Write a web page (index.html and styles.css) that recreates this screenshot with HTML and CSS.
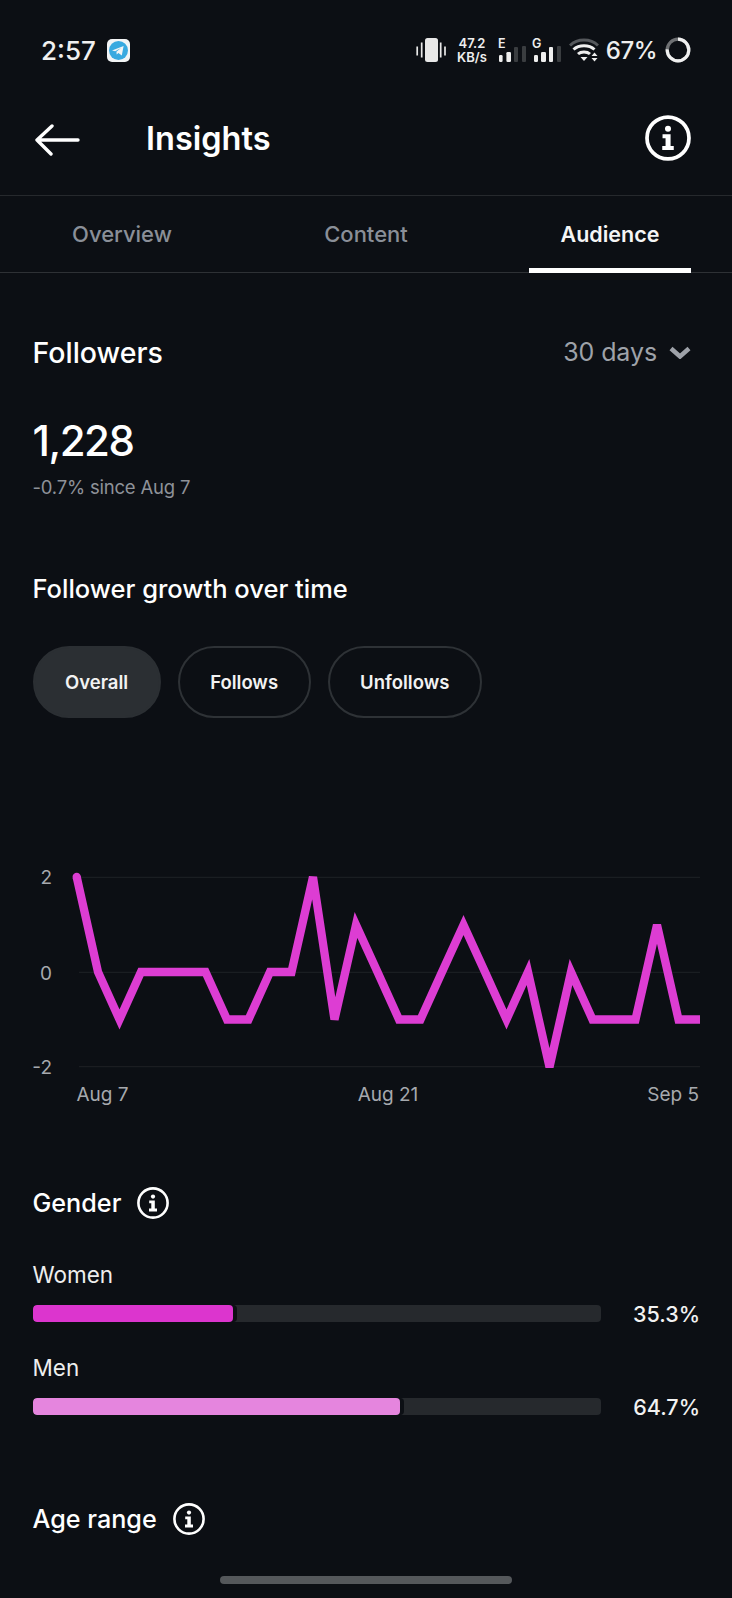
FILE: index.html
```html
<!DOCTYPE html>
<html lang="en">
<head>
  <meta charset="UTF-8">
  <meta name="viewport" content="width=device-width, initial-scale=1.0">
  <title>Insights</title>
  <link rel="stylesheet" href="styles.css">
</head>
<body>
  <svg class="defs" width="0" height="0">
    <symbol id="info" viewBox="0 0 32 32">
      <circle cx="16" cy="16" r="14.6" fill="none" stroke="currentColor" stroke-width="2.6"/>
      <circle cx="16" cy="9.6" r="2.1" fill="currentColor"/>
      <path d="M12.2 13.4h5.6v8.2h2.2v2.8h-8v-2.8h2.3v-5.4h-2.1z" fill="currentColor"/>
    </symbol>
  </svg>

  <div class="page">
    <div class="statusbar">
      <div class="status-left">
        <span class="time">2:57</span>
        <svg class="tg" width="23" height="23" viewBox="0 0 23 23">
          <rect width="23" height="23" rx="5" fill="#f2f4f5"/>
          <circle cx="11.5" cy="11.5" r="9.5" fill="#38a9e0"/>
          <path d="M5 11.6l11.6-4.6-1.8 9.6-3.4-2.6-1.7 1.6-.3-2.9 4.6-3.6-5.8 3.1z" fill="#f2f4f5"/>
        </svg>
      </div>
      <div class="status-right">
        <svg width="30" height="24" viewBox="0 0 30 24">
          <rect x="9" y="0" width="13" height="24" rx="2.5" fill="#e8e8e8"/>
          <path d="M1.2 8.5v9M5.7 4.5v15M24.7 4.5v15M29 8.5v9" stroke="#e8e8e8" stroke-width="1.7"/>
        </svg>
        <div class="speed"><span>47.2</span><span>KB/s</span></div>
        <svg class="signal" width="29" height="26" viewBox="0 0 29 26">
          <text class="sig-letter" x="1" y="11">E</text>
          <rect x="2" y="18" width="3.6" height="7" rx="1.2" fill="#eee"/>
          <rect x="9.4" y="15" width="4.6" height="10" rx="1.2" fill="#eee"/>
          <rect x="17" y="10" width="4" height="15" rx="1" fill="#3a3d40"/>
          <rect x="25" y="9" width="4" height="16" rx="1" fill="#3a3d40"/>
        </svg>
        <svg class="signal" width="29" height="26" viewBox="0 0 29 26">
          <text class="sig-letter" x="0" y="11">G</text>
          <rect x="2" y="18" width="4" height="7" rx="1.2" fill="#eee"/>
          <rect x="9" y="15" width="5" height="10" rx="1.2" fill="#eee"/>
          <rect x="17" y="10" width="4" height="15" rx="1" fill="#eee"/>
          <rect x="25" y="9" width="4" height="16" rx="1" fill="#3a3d40"/>
        </svg>
        <svg class="wifi" width="30" height="24" viewBox="0 0 30 24">
          <path d="M1 7.5C8.5 .2 21.500 .2 29 7.5" fill="none" stroke="#55585c" stroke-width="3"/>
          <path d="M4.500 11.500C10 6.500 20 6.500 25.500 11.500" fill="none" stroke="#eee" stroke-width="3"/>
          <path d="M9 16C12 13.300 18 13.300 21 16" fill="none" stroke="#eee" stroke-width="3"/>
          <path d="M11.500 19h7l-3.500 4z" fill="#eee"/>
          <path d="M22.500 18l3-3.500 3 3.500zM22.500 20h6l-3 3.500z" fill="#eee"/>
        </svg>
        <span class="batt-text">67%</span>
        <svg width="26" height="26" viewBox="0 0 26 26">
          <circle cx="13" cy="13" r="10.800" fill="none" stroke="#6e7073" stroke-width="3.200"/>
          <circle class="batt-ring" cx="13" cy="13" r="10.800" fill="none" stroke="#f0f0f0" stroke-width="3.200" pathLength="100" stroke-dasharray="76 100"/>
        </svg>
      </div>
    </div>

    <header class="topbar">
      <svg class="back" width="46" height="32" viewBox="0 0 46 32">
        <path d="M44 16H3M18 2L3 16l14 14" fill="none" stroke="#fff" stroke-width="3.400" stroke-linecap="round" stroke-linejoin="round"/>
      </svg>
      <h1>Insights</h1>
      <svg class="info-big"><use href="#info"/></svg>
    </header>

    <nav class="tabs">
      <div class="tab">Overview</div>
      <div class="tab">Content</div>
      <div class="tab active">Audience</div>
    </nav>

    <section class="wrap">
      <div class="followers-row">
        <h2>Followers</h2>
        <div class="range">30 days
          <svg width="22" height="13" viewBox="0 0 22 13"><path d="M2 2.500L11 10.500l9-8" fill="none" stroke="#9ea2a9" stroke-width="4.500"/></svg>
        </div>
      </div>
      <div class="bignum">1,228</div>
      <div class="since">-0.7% since Aug 7</div>
      <h3 class="growth">Follower growth over time</h3>
      <div class="pills">
        <div class="pill on">Overall</div>
        <div class="pill">Follows</div>
        <div class="pill">Unfollows</div>
      </div>
    </section>

    <svg class="chart" width="732" height="260" viewBox="0 860 732 260">
      <path d="M79 877.300H700M79 972.300H700M79 1066.700H700" stroke="#1f2226" stroke-width="1"/>
      <text class="ax" x="52" y="884" text-anchor="end">2</text>
      <text class="ax" x="52" y="980" text-anchor="end">0</text>
      <text class="ax" x="52" y="1074" text-anchor="end">-2</text>
      <circle class="line-start" cx="76.700" cy="877" r="4.150"/>
      <polyline class="line" points="76.700,877 98,972 119.500,1019.500 141,972 162.500,972 184,972 205.500,972 227,1019.500 248.500,1019.500 270,972 291.500,972 313,877 334.500,1019.500 356,925 377.500,972 399,1019.500 420.500,1019.500 442,972 463.500,925 485,972 506.500,1019.500 528,972 549.500,1067 571,972 592.500,1019.500 614,1019.500 635.500,1019.500 657,925 678.500,1019.500 700,1019.500"/>
      <text class="ax" x="76.500" y="1101">Aug 7</text>
      <text class="ax" x="388" y="1101" text-anchor="middle">Aug 21</text>
      <text class="ax" x="699" y="1101" text-anchor="end">Sep 5</text>
    </svg>

    <section class="wrap">
      <div class="title-row gender">
        <h3>Gender</h3>
        <svg class="info"><use href="#info"/></svg>
      </div>
      <div class="bar-label">Women</div>
      <div class="bar-row">
        <div class="track"><div class="fill women" style="width: 35.3%"></div></div>
        <span class="pct">35.3%</span>
      </div>
      <div class="bar-label second">Men</div>
      <div class="bar-row">
        <div class="track"><div class="fill men" style="width: 64.7%"></div></div>
        <span class="pct">64.7%</span>
      </div>
      <div class="title-row age">
        <h3>Age range</h3>
        <svg class="info"><use href="#info"/></svg>
      </div>
    </section>

    <div class="home-bar"></div>
  </div>
</body>
</html>
```

FILE: styles.css
```css
* {
  box-sizing: border-box;
}
html, body {
  margin: 0;
  padding: 0;
  background: #0c0f14;
}
body {
  font-family: Inter, "Noto Sans", sans-serif;
  color: #fff;
}
h1, h2, h3 {
  margin: 0;
}
.defs {
  position: absolute;
}
.page {
  position: relative;
  width: 732px;
  height: 1598px;
  overflow: hidden;
}

/* status bar */
.statusbar {
  height: 100px;
  padding: 0 41px;
  display: flex;
  align-items: center;
  justify-content: space-between;
}
.status-left {
  display: flex;
  align-items: center;
  gap: 11px;
}
.time {
  font-size: 26px;
  font-weight: 500;
  color: #f0f0f0;
}
.status-right {
  display: flex;
  align-items: center;
  gap: 0;
}
.speed {
  display: flex;
  flex-direction: column;
  align-items: center;
  margin: 0 10px 0 11px;
  font-size: 13px;
  line-height: 14px;
  font-weight: 600;
  color: #eee;
}
.signal {
  margin-right: 6px;
  overflow: visible;
}
.sig-letter {
  font-size: 12.5px;
  font-weight: 600;
  fill: #eee;
}
.wifi {
  margin-left: 2px;
}
.batt-text {
  margin: 0 8px 0 7px;
  font-size: 24px;
  letter-spacing: -0.5px;
  font-weight: 500;
  color: #eee;
}
.batt-ring {
  transform: rotate(-90deg);
  transform-origin: center;
}

/* header */
.topbar {
  height: 95px;
  padding: 0 41px 19px 34px;
  display: flex;
  align-items: center;
}
.back {
  flex: none;
  margin-top: 4px;
}
.topbar h1 {
  margin-left: 66px;
  font-size: 32.500px;
  font-weight: 600;
}
.info-big {
  width: 46px;
  height: 46px;
  margin-left: auto;
  color: #fff;
}

/* tabs */
.tabs {
  display: flex;
  height: 78px;
  border-top: 1px solid #26292d;
  border-bottom: 1px solid #2e3135;
}
.tab {
  position: relative;
  flex: 1;
  display: flex;
  align-items: center;
  justify-content: center;
  font-size: 22px;
  font-weight: 500;
  color: #8a8f98;
}
.tab.active {
  font-weight: 600;
  font-size: 21.500px;
  color: #f5f5f5;
}
.tab.active::after {
  content: "";
  position: absolute;
  left: 41px;
  right: 41px;
  bottom: -1px;
  height: 5px;
  background: #fff;
}

/* followers */
.wrap {
  padding: 0 32px 0 32.500px;
}
.followers-row {
  margin-top: 59px;
  height: 40px;
  display: flex;
  align-items: center;
  justify-content: space-between;
}
.followers-row h2 {
  font-size: 28.500px;
  font-weight: 500;
}
.range {
  display: flex;
  align-items: center;
  gap: 12px;
  margin-right: 9px;
  font-size: 25px;
  letter-spacing: -0.1px;
  color: #9ea2a9;
}
.bignum {
  margin-top: 44px;
  height: 50px;
  line-height: 50px;
  font-size: 42px;
  font-weight: 500;
  letter-spacing: -1.500px;
}
.since {
  margin-top: 9px;
  line-height: 24px;
  font-size: 18.500px;
  letter-spacing: -0.2px;
  color: #8e9299;
}
.growth {
  margin-top: 74px;
  line-height: 32px;
  font-size: 25.500px;
  font-weight: 500;
}
.pills {
  display: flex;
  gap: 17px;
  margin-top: 41px;
}
.pill {
  height: 72px;
  padding: 0 30.500px;
  display: flex;
  align-items: center;
  border: 2px solid #2e3236;
  border-radius: 36px;
  font-size: 18.500px;
  font-weight: 600;
  color: #f2f2f2;
}
.pill.on {
  background: #2b2f33;
  border-color: #2b2f33;
}

/* chart */
.chart {
  display: block;
  margin-top: 142px;
}
.ax {
  font-size: 19px;
  fill: #a6a9ae;
}
.line {
  fill: none;
  stroke: #dd3dd3;
  stroke-width: 8.300;
  stroke-linejoin: miter;
}
.line-start {
  fill: #dd3dd3;
}

/* gender and age */
.title-row {
  height: 36px;
  display: flex;
  align-items: center;
  gap: 16px;
}
.title-row h3 {
  font-size: 25.200px;
  font-weight: 500;
}
.gender {
  margin-top: 65px;
}
.age {
  margin-top: 86px;
}
.info {
  width: 32px;
  height: 32px;
  color: #fff;
}
.bar-label {
  margin-top: 39px;
  line-height: 30px;
  font-size: 22.500px;
  color: #eee;
}
.bar-label.second {
  margin-top: 31px;
}
.bar-row {
  margin-top: 15px;
  height: 17px;
  display: flex;
  align-items: center;
}
.track {
  width: 568px;
  height: 17px;
  background: #26292d;
  border-radius: 4px;
  overflow: hidden;
}
.fill {
  height: 100%;
  border-radius: 4px;
  box-shadow: 4px 0 0 #0c0f14;
}
.women {
  background: #dc35ce;
}
.men {
  background: #e585de;
}
.pct {
  margin-left: auto;
  font-size: 21.500px;
  font-weight: 500;
  color: #f2f2f2;
}

.home-bar {
  position: absolute;
  left: 220px;
  bottom: 14px;
  width: 292px;
  height: 8px;
  border-radius: 4px;
  background: #55585b;
}
```
